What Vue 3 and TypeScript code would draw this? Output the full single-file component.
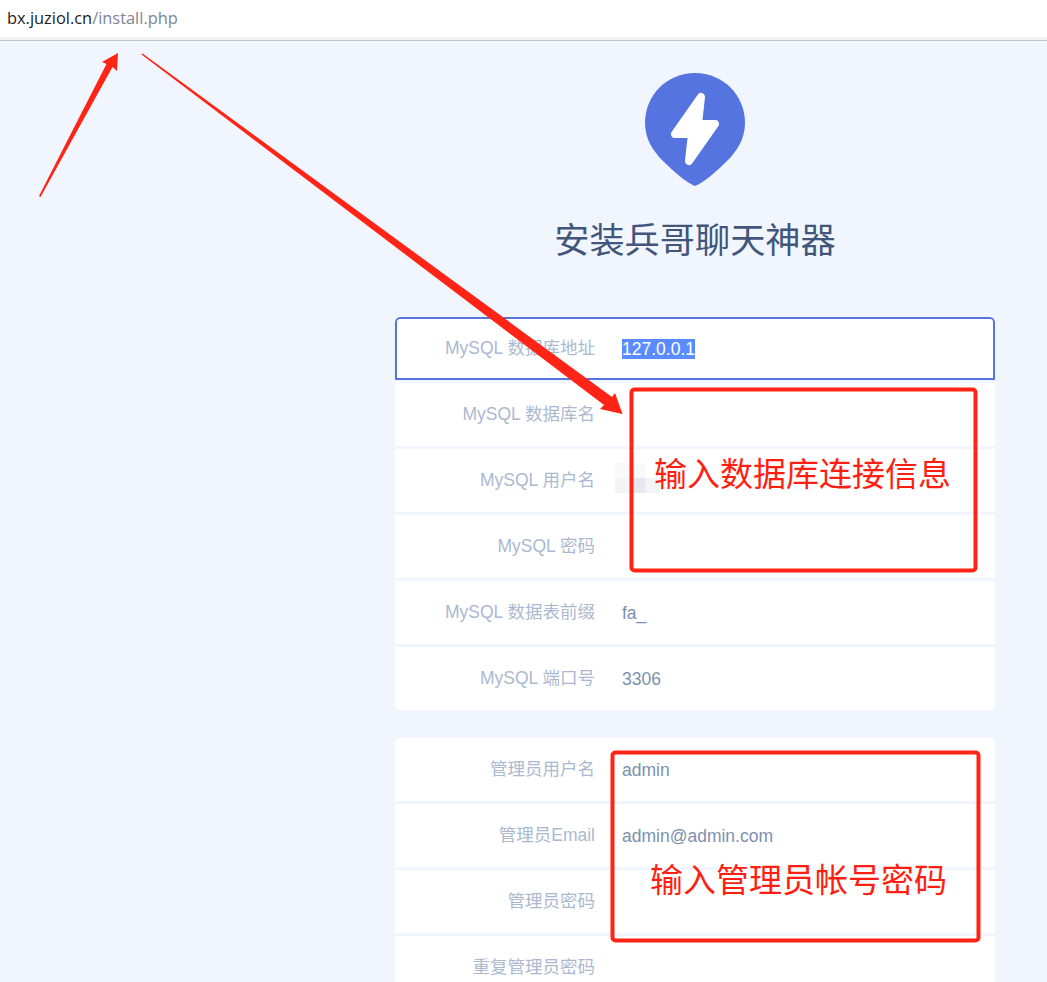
<script setup lang="ts">
interface Field {
  label: string
  value?: string
  selected?: boolean
}

const dbFields: Field[] = [
  { label: 'MySQL 数据库地址', value: '127.0.0.1', selected: true },
  { label: 'MySQL 数据库名' },
  { label: 'MySQL 用户名' },
  { label: 'MySQL 密码' },
  { label: 'MySQL 数据表前缀', value: 'fa_' },
  { label: 'MySQL 端口号', value: '3306' }
]

const adminFields: Field[] = [
  { label: '管理员用户名', value: 'admin' },
  { label: '管理员Email', value: 'admin@admin.com' },
  { label: '管理员密码' },
  { label: '重复管理员密码' }
]

const cards = [dbFields, adminFields]
</script>

<template>
  <div class="page">
    <header class="address-bar">
      <span class="host">bx.juziol.cn</span><span class="path">/install.php</span>
    </header>
    <div class="toolbar-edge"></div>

    <main class="install">
      <svg class="logo" width="100" height="113" viewBox="0 0 100 113">
        <path
          fill="#5674e0"
          d="M50 0C78 0 100 22 100 50C100 66 92 78 82 88C72 98 58 110 50 113C42 110 28 98 18 88C8 78 0 66 0 50C0 22 22 0 50 0Z"
        />
        <path
          fill="#fff"
          stroke="#fff"
          stroke-width="8"
          stroke-linejoin="round"
          d="M56 24L53 51H70L44 88L47 61H30Z"
        />
      </svg>
      <h1 class="title">安装兵哥聊天神器</h1>

      <form class="forms">
        <section v-for="(fields, c) in cards" :key="c" class="card">
          <div
            v-for="field in fields"
            :key="field.label"
            class="row"
            :class="{ focused: field.selected }"
          >
            <label class="label">{{ field.label }}</label>
            <div class="value">
              <span :class="{ selected: field.selected }">{{ field.value }}</span>
            </div>
          </div>
        </section>
      </form>
    </main>

    <div class="mosaic">
      <i></i><i></i><i class="clear"></i>
      <i class="mid"></i><i class="dark"></i><i class="mid"></i>
    </div>

    <svg class="marks" width="1047" height="982" viewBox="0 0 1047 982">
      <path fill="#ff2415" d="M39 196L40.500 197L112.500 67L117 71L118 53L102 62L106.500 64Z" />
      <path fill="#ff2415" d="M141.500 54.500L142.500 53.500L612 397L615 393L622.500 414L600 409L604 405Z" />
      <rect class="box" x="631.500" y="389.500" width="344" height="181" rx="3" />
      <rect class="box" x="612.500" y="752.500" width="366" height="188" rx="3" />
    </svg>
    <span class="note note-db">输入数据库连接信息</span>
    <span class="note note-admin">输入管理员帐号密码</span>
  </div>
</template>

<style>
body {
  background: #f1f6fe;
}
</style>

<style scoped>
.page {
  position: relative;
  height: 982px;
  overflow: hidden;
  background: #f1f6fe;
  font-family: "Liberation Sans", "Noto Sans CJK SC", sans-serif;
}

.address-bar {
  height: 37px;
  padding-left: 7px;
  background: #fff;
  font-family: "Open Sans", sans-serif;
  font-size: 16.4px;
  line-height: 35px;
  box-sizing: border-box;
}

.host {
  color: #1c1c22;
}

.path {
  color: #7d8494;
}

.toolbar-edge {
  height: 4px;
  box-sizing: border-box;
  background: #f3f3f3;
  border-bottom: 1px solid #c4c4c4;
}

.install {
  display: flex;
  flex-direction: column;
  align-items: center;
  width: 600px;
  margin-left: 395px;
  padding-top: 32px;
}

.logo {
  display: block;
}

.title {
  margin: 28px 0 0;
  font-size: 35.2px;
  font-weight: 400;
  line-height: 48px;
  color: #41567a;
  font-family: "Noto Sans CJK SC", sans-serif;
}

.forms {
  display: flex;
  flex-direction: column;
  gap: 28px;
  width: 100%;
  margin-top: 55px;
}

.card {
  display: flex;
  flex-direction: column;
  gap: 3px;
  border-radius: 5px;
  overflow: hidden;
}

.row {
  display: flex;
  align-items: center;
  gap: 27px;
  height: 63px;
  flex: none;
  background: #fff;
  font-size: 17.5px;
  line-height: 24px;
}

.row.focused {
  box-sizing: border-box;
  border: 2px solid #5674e0;
  border-radius: 5px 5px 0 0;
}

.row.focused .label {
  width: 198px;
}

.label {
  width: 200px;
  flex: none;
  text-align: right;
  color: #abb9d0;
  position: relative;
  top: -1px;
}

.value {
  color: #7c90b0;
}

.selected {
  display: inline-block;
  background: #5b8cff;
  color: #fff;
  line-height: 20px;
}

.mosaic {
  position: absolute;
  left: 615px;
  top: 463px;
  display: grid;
  grid-template-columns: repeat(3, 15px);
  grid-auto-rows: 15px;
}

.mosaic i {
  background: #f8f9fb;
}

.mosaic .clear {
  background: #fff;
}

.mosaic .mid {
  background: #f3f4f8;
}

.mosaic .dark {
  background: #e6e8f0;
}

.marks {
  position: absolute;
  left: 0;
  top: 0;
}

.box {
  fill: none;
  stroke: #ff2415;
  stroke-width: 4;
}

.note {
  position: absolute;
  font-family: "Noto Sans CJK SC", sans-serif;
  font-size: 33px;
  line-height: 44px;
  color: #ff1f12;
  white-space: nowrap;
}

.note-db {
  left: 654px;
  top: 450px;
}

.note-admin {
  left: 650px;
  top: 856px;
}
</style>
